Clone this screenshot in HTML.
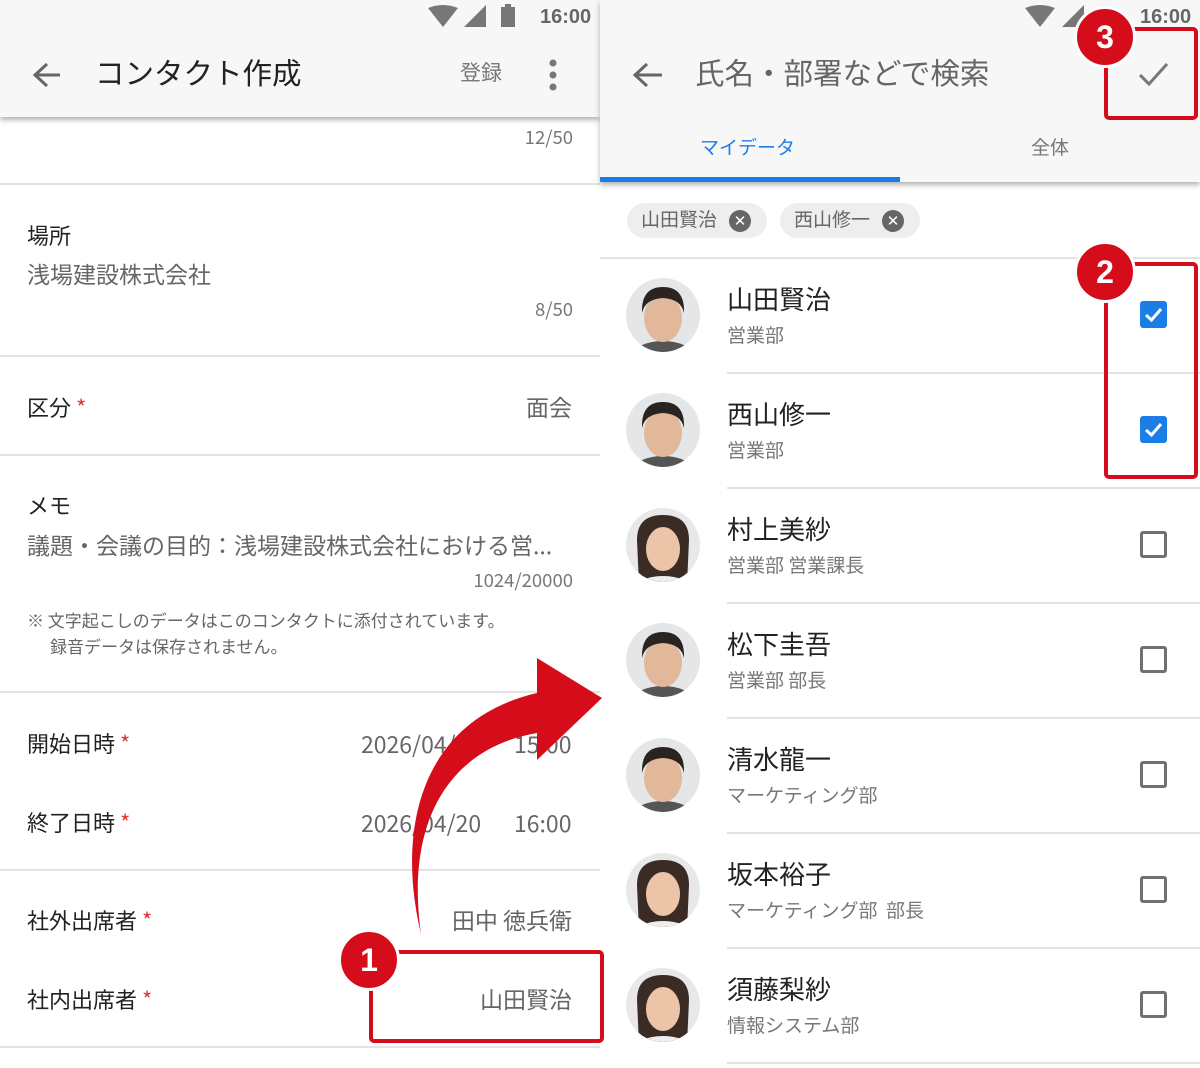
<!DOCTYPE html>
<html><head><meta charset="utf-8">
<style>
*{margin:0;padding:0;box-sizing:border-box}
body{width:1200px;height:1067px;background:#fff;position:relative;overflow:hidden;font-family:"Noto Sans CJK JP","Liberation Sans",sans-serif}
.t{position:absolute;white-space:nowrap;line-height:1;margin-top:-2px}
.r{text-align:right}
.hl{position:absolute;height:2px;background:#e3e3e3}
.req{color:#e53935}
.lab{font-size:22px;color:#222}
.val{font-size:23px;color:#666}
.cnt{font-size:18.5px;color:#777}
.name{font-size:26px;color:#222;left:727px}
.dept{font-size:19px;color:#777;left:727px}
.cb{position:absolute;left:1140px;width:27px;height:27px;border:3px solid #707070;border-radius:3px}
.cbon{background:#1a7ee6;border-color:#1a7ee6}
.box{position:absolute;border:4px solid #d50d1b;border-radius:5px}
.num{position:absolute;width:62px;height:62px;border-radius:50%;background:#d50d1b;border:3px solid #fff;color:#fff;font-weight:bold;font-size:32px;text-align:center;line-height:56px;font-family:"Liberation Sans",sans-serif}
</style></head><body>

<div style="position:absolute;left:0;top:0;width:600px;height:117px;background:#f7f7f7;box-shadow:0 3px 5px rgba(0,0,0,.3);z-index:2">
<svg style="position:absolute;left:0;top:0" width="600" height="117">
<path d="M428 8 Q443 2 458 8 L443 27 Z" fill="#777"/>
<path d="M464 27 L486 5 L486 27 Z" fill="#777"/>
<rect x="501" y="7" width="14" height="20" fill="#777"/><rect x="505" y="4" width="6" height="4" fill="#777"/>
<path d="M60 75 H36 M47 64 L35 75 L47 86" stroke="#666" stroke-width="3" fill="none"/>
<circle cx="553" cy="63" r="3.5" fill="#777"/><circle cx="553" cy="75" r="3.5" fill="#777"/><circle cx="553" cy="87" r="3.5" fill="#777"/>
</svg>
<div class="t" style="left:540px;top:9px;font-size:20px;color:#666;font-weight:bold;font-family:'Liberation Sans',sans-serif">16:00</div>
<div class="t" style="left:95px;top:60px;font-size:29.5px;color:#222">コンタクト作成</div>
<div class="t" style="left:460px;top:64px;font-size:21px;color:#777">登録</div>
</div>

<div class="t cnt r" style="right:627px;top:130px">12/50</div>
<div class="hl" style="left:0;width:600px;top:183px"></div>
<div class="t lab" style="left:27px;top:226px">場所</div>
<div class="t val" style="left:27px;top:264px">浅場建設株式会社</div>
<div class="t cnt r" style="right:627px;top:302px">8/50</div>
<div class="hl" style="left:0;width:600px;top:355px"></div>
<div class="t lab" style="left:27px;top:398px">区分 <span class="req">*</span></div>
<div class="t val r" style="right:628px;top:397px">面会</div>
<div class="hl" style="left:0;width:600px;top:454px"></div>
<div class="t lab" style="left:27px;top:496px">メモ</div>
<div class="t val" style="left:27px;top:535px">議題・会議の目的：浅場建設株式会社における営...</div>
<div class="t cnt r" style="right:627px;top:573px">1024/20000</div>
<div class="t" style="left:27px;top:613px;font-size:17px;color:#666">※ 文字起こしのデータはこのコンタクトに添付されています。</div>
<div class="t" style="left:50px;top:639px;font-size:17px;color:#666">録音データは保存されません。</div>
<div class="hl" style="left:0;width:600px;top:691px"></div>
<div class="t lab" style="left:27px;top:734px">開始日時 <span class="req">*</span></div>
<div class="t val" style="left:361px;top:734px">2026/04/20</div>
<div class="t val" style="left:514px;top:734px">15:00</div>
<div class="t lab" style="left:27px;top:813px">終了日時 <span class="req">*</span></div>
<div class="t val" style="left:361px;top:813px">2026/04/20</div>
<div class="t val" style="left:514px;top:813px">16:00</div>
<div class="hl" style="left:0;width:600px;top:869px"></div>
<div class="t lab" style="left:27px;top:911px">社外出席者 <span class="req">*</span></div>
<div class="t val r" style="right:628px;top:910px">田中 徳兵衛</div>
<div class="t lab" style="left:27px;top:990px">社内出席者 <span class="req">*</span></div>
<div class="t val r" style="right:628px;top:989px">山田賢治</div>
<div class="hl" style="left:0;width:600px;top:1046px"></div>

<div style="position:absolute;left:600px;top:0;width:600px;height:182px;background:#f7f7f7;box-shadow:0 3px 5px rgba(0,0,0,.3);z-index:2">
<svg style="position:absolute;left:0;top:0" width="600" height="182">
<path d="M425 8 Q440 2 455 8 L440 27 Z" fill="#777"/>
<path d="M462 27 L484 5 L484 27 Z" fill="#777"/>
<path d="M62 75 H36 M47 64 L35 75 L47 86" stroke="#666" stroke-width="3" fill="none"/>
<path d="M540 75 L549 84 L567 64" stroke="#777" stroke-width="3" fill="none"/>
<rect x="0" y="177" width="300" height="5" fill="#1a7ee6"/>
</svg>
<div class="t" style="left:540px;top:9px;font-size:20px;color:#666;font-weight:bold;font-family:'Liberation Sans',sans-serif">16:00</div>
<div class="t" style="left:95px;top:60px;font-size:29.5px;color:#666">氏名・部署などで検索</div>
<div class="t" style="left:100px;top:139px;font-size:19px;color:#1a7ee6">マイデータ</div>
<div class="t" style="left:431px;top:139px;font-size:19px;color:#777">全体</div>
</div>

<div style="position:absolute;left:627px;top:203px;width:140px;height:35px;background:#eee;border-radius:18px"></div>
<div class="t" style="left:641px;top:211px;font-size:19px;color:#666">山田賢治</div>
<div style="position:absolute;left:729px;top:210px;width:22px;height:22px;border-radius:50%;background:#666;color:#fff;font-size:15px;line-height:22px;text-align:center;font-weight:bold;font-family:'DejaVu Sans',sans-serif">✕</div>
<div style="position:absolute;left:780px;top:203px;width:140px;height:35px;background:#eee;border-radius:18px"></div>
<div class="t" style="left:794px;top:211px;font-size:19px;color:#666">西山修一</div>
<div style="position:absolute;left:882px;top:210px;width:22px;height:22px;border-radius:50%;background:#666;color:#fff;font-size:15px;line-height:22px;text-align:center;font-weight:bold;font-family:'DejaVu Sans',sans-serif">✕</div>
<div class="hl" style="left:600px;width:600px;top:257px"></div>

<svg style="position:absolute;left:600px;top:258px" width="110" height="810">
<defs>
<clipPath id="c"><circle cx="0" cy="0" r="37"/></clipPath>
<g id="m"><circle r="37" fill="#e4e6e8"/><g clip-path="url(#c)"><ellipse cx="0" cy="40" rx="30" ry="14" fill="#555"/><ellipse cx="0" cy="3" rx="19" ry="24" fill="#e2b89a"/><path d="M-21 -2 Q-22 -28 0 -28 Q22 -28 21 -2 Q18 -16 0 -17 Q-18 -16 -21 -2Z" fill="#2a2420"/></g></g>
<g id="f"><circle r="37" fill="#e8e8e8"/><g clip-path="url(#c)"><path d="M-24 40 L-26 -5 Q-26 -30 0 -30 Q26 -30 26 -5 L24 40Z" fill="#3a2c24"/><ellipse cx="0" cy="45" rx="30" ry="14" fill="#eee"/><ellipse cx="0" cy="4" rx="17" ry="22" fill="#ecc4a8"/></g></g>
</defs>
<use href="#m" x="63" y="57"/>
<use href="#m" x="63" y="172"/>
<use href="#f" x="63" y="287"/>
<use href="#m" x="63" y="402"/>
<use href="#m" x="63" y="517"/>
<use href="#f" x="63" y="632"/>
<use href="#f" x="63" y="747"/>
</svg>

<div class="t name" style="top:288px">山田賢治</div><div class="t dept" style="top:327px">営業部</div>
<div class="hl" style="left:727px;width:473px;top:372px"></div>
<div class="t name" style="top:403px">西山修一</div><div class="t dept" style="top:442px">営業部</div>
<div class="hl" style="left:727px;width:473px;top:487px"></div>
<div class="t name" style="top:518px">村上美紗</div><div class="t dept" style="top:557px">営業部 営業課長</div>
<div class="hl" style="left:727px;width:473px;top:602px"></div>
<div class="t name" style="top:633px">松下圭吾</div><div class="t dept" style="top:672px">営業部 部長</div>
<div class="hl" style="left:727px;width:473px;top:717px"></div>
<div class="t name" style="top:748px">清水龍一</div><div class="t dept" style="top:787px">マーケティング部</div>
<div class="hl" style="left:727px;width:473px;top:832px"></div>
<div class="t name" style="top:863px">坂本裕子</div><div class="t dept" style="top:902px">マーケティング部&nbsp; 部長</div>
<div class="hl" style="left:727px;width:473px;top:947px"></div>
<div class="t name" style="top:978px">須藤梨紗</div><div class="t dept" style="top:1017px">情報システム部</div>
<div class="hl" style="left:727px;width:473px;top:1062px"></div>

<div class="cb cbon" style="top:301px"><svg width="21" height="21"><path d="M3 11 L8.5 16 L18 5" stroke="#fff" stroke-width="3" fill="none"/></svg></div>
<div class="cb cbon" style="top:416px"><svg width="21" height="21"><path d="M3 11 L8.5 16 L18 5" stroke="#fff" stroke-width="3" fill="none"/></svg></div>
<div class="cb" style="top:531px"></div>
<div class="cb" style="top:646px"></div>
<div class="cb" style="top:761px"></div>
<div class="cb" style="top:876px"></div>
<div class="cb" style="top:991px"></div>

<svg style="position:absolute;left:0;top:0;z-index:5" width="1200" height="1067">
<path d="M421 934 C396 830 420 720 537 693 L537 658 L602 698 L537 760 L537 733 C450 748 405 820 421 934 Z" fill="#d50d1b"/>
</svg>
<div class="box" style="left:369px;top:950px;width:235px;height:93px;z-index:5"></div>
<div class="num" style="left:338px;top:929px;z-index:6">1</div>
<div class="box" style="left:1104px;top:262px;width:94px;height:217px;z-index:5"></div>
<div class="num" style="left:1074px;top:241px;z-index:6">2</div>
<div class="box" style="left:1104px;top:27px;width:94px;height:93px;z-index:5"></div>
<div class="num" style="left:1074px;top:6px;z-index:6">3</div>
</body></html>
